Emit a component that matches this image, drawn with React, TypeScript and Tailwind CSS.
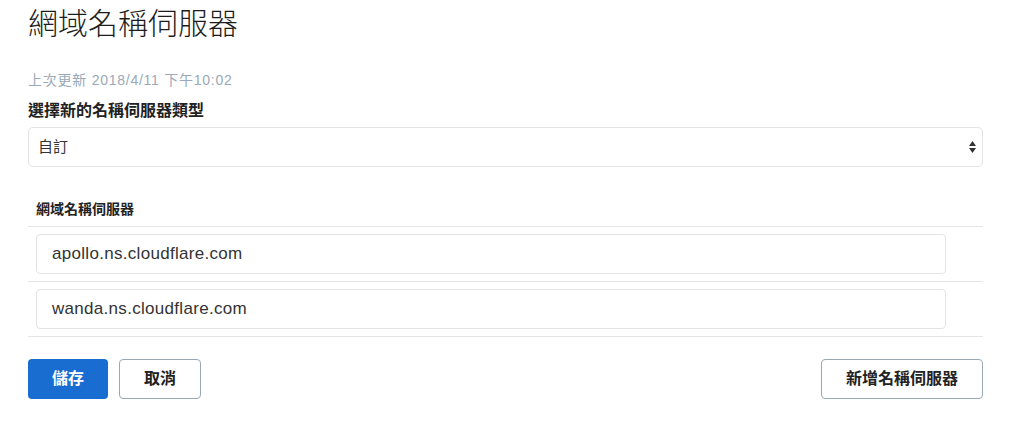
const servers = ['apollo.ns.cloudflare.com', 'wanda.ns.cloudflare.com'];

const font = { fontFamily: '"Liberation Sans", "Noto Sans CJK TC", sans-serif' };

export default function App() {
  return (
    <div className="w-[1027px] h-[440px] bg-white px-[28px] text-[#222]" style={font}>
      <h1 className="pt-[6px] text-[30px] leading-[36px] font-light text-[#1d1d1d]">網域名稱伺服器</h1>

      <p className="mt-[29px] text-[14px] leading-[18px] tracking-[0.75px] text-[#9aa9b8]">上次更新 2018/4/11 下午10:02</p>

      <label className="block mt-[12px] text-[16px] leading-[20px] font-bold text-[#222]">選擇新的名稱伺服器類型</label>
      <div className="mt-[6px] h-[40px] w-[955px] rounded-[5px] border border-[#e3e3e3] flex items-center justify-between pl-[9px] pr-[5px]">
        <span className="text-[15px] text-[#333]">自訂</span>
        <svg width="9" height="14" viewBox="0 0 9 14" className="text-[#333]">
          <path d="M4.5 1 L8 6 L1 6 Z" fill="currentColor" />
          <path d="M1 8 L8 8 L4.5 13 Z" fill="currentColor" />
        </svg>
      </div>

      <div className="mt-[33px] w-[955px]">
        <div className="pl-[8px] pb-[8px] text-[14px] leading-[18px] font-bold text-[#222]">網域名稱伺服器</div>
        <div className="border-t border-[#e5e5e5]">
          {servers.map((s) => (
            <div key={s} className="border-b border-[#e5e5e5] pl-[8px] pr-[37px] py-[7px]">
              <div className="h-[40px] rounded-[4px] border border-[#e3e3e3] flex items-center px-[15px] text-[17px] tracking-[0.3px] text-[#333]">
                {s}
              </div>
            </div>
          ))}
        </div>
      </div>

      <div className="mt-[22px] w-[955px] flex items-center">
        <button className="h-[40px] w-[80px] rounded-[4px] bg-[#1a6dd0] text-white text-[16px] font-bold">儲存</button>
        <button className="ml-[11px] h-[40px] w-[82px] rounded-[4px] border border-[#9aa8b6] bg-white text-[#222] text-[16px] font-bold">取消</button>
        <button className="ml-auto h-[40px] w-[162px] rounded-[4px] border border-[#9aa8b6] bg-white text-[#222] text-[16px] font-bold">新增名稱伺服器</button>
      </div>
    </div>
  );
}
